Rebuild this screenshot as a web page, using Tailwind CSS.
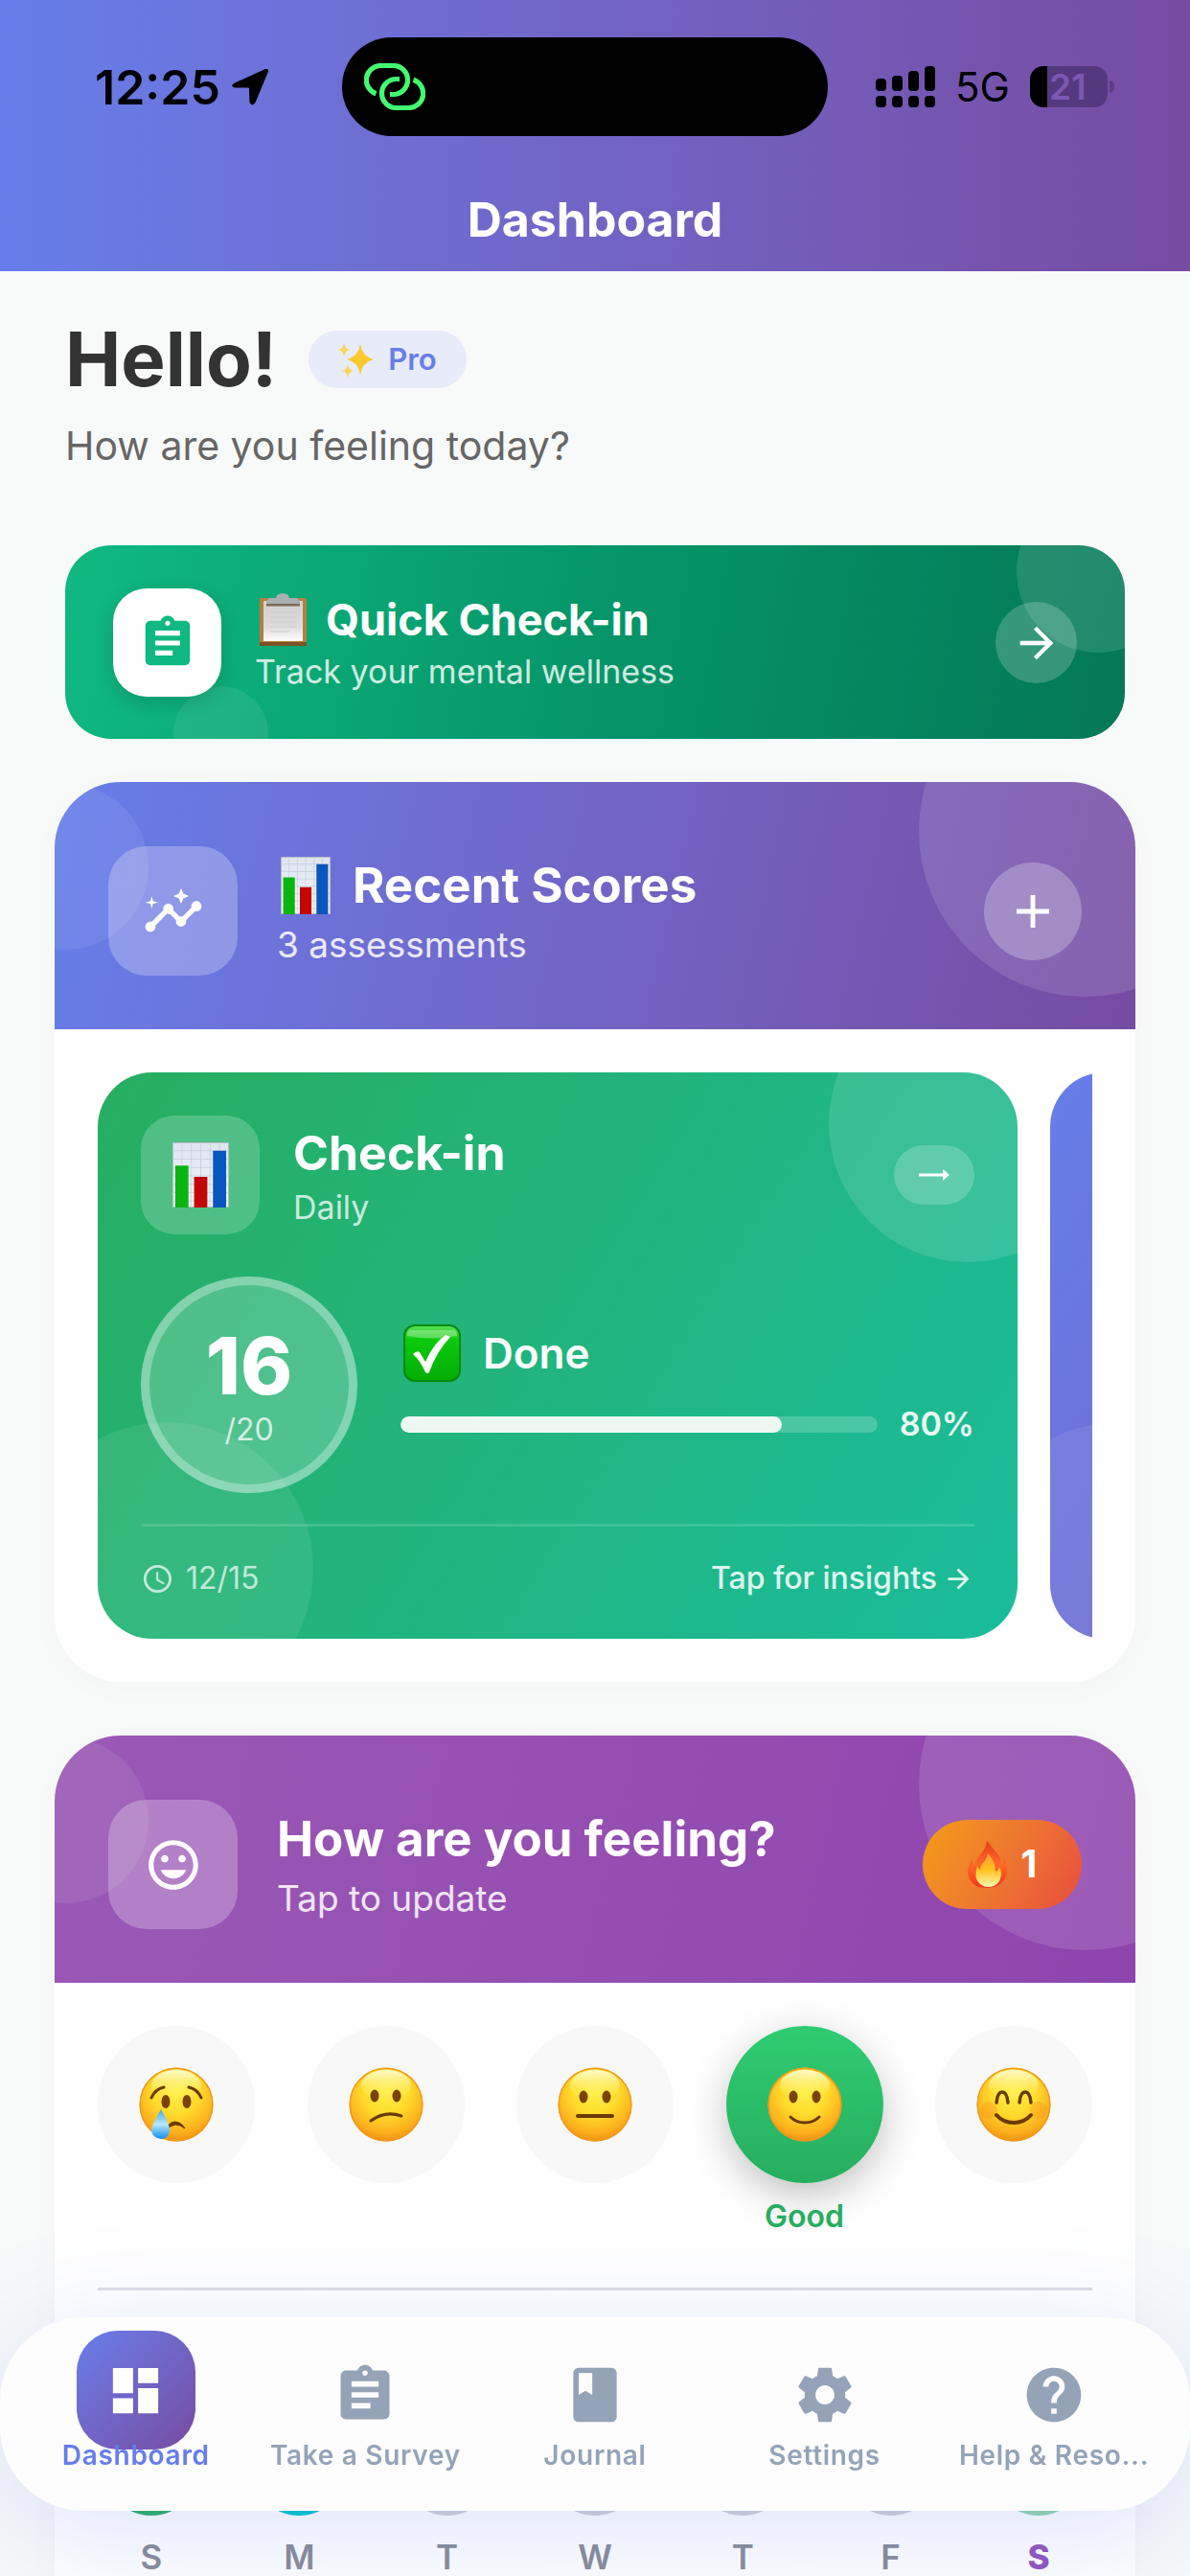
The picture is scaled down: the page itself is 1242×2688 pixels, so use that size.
<!DOCTYPE html>
<html lang="en">
<head>
  <meta charset="UTF-8">
  <title>Dashboard</title>
  <meta name="viewport" content="width=device-width, initial-scale=1.0">
  <script src="https://cdn.jsdelivr.net/npm/@tailwindcss/browser@4"></script>
  <style>
    body { font-family: 'Inter', 'Liberation Sans', sans-serif; }
  </style>
</head>
<body class="h-screen overflow-hidden bg-[#f8f9f9] flex flex-col">

  <!-- Shared shapes -->
  <svg class="absolute size-0" aria-hidden="true">
    <defs>
      <radialGradient id="face" cx="50%" cy="32%" r="70%">
        <stop offset="0" stop-color="#fff04a"/>
        <stop offset="0.45" stop-color="#ffdb2c"/>
        <stop offset="0.8" stop-color="#fcb01c"/>
        <stop offset="1" stop-color="#ee8b10"/>
      </radialGradient>
      <linearGradient id="shine" x1="0" y1="0" x2="0" y2="1">
        <stop offset="0" stop-color="#fffbd0"/>
        <stop offset="1" stop-color="#fff04a" stop-opacity="0"/>
      </linearGradient>
      <linearGradient id="tear" x1="0" y1="0" x2="0" y2="1">
        <stop offset="0" stop-color="#3aa5ea"/>
        <stop offset="0.5" stop-color="#b8e8fd"/>
        <stop offset="1" stop-color="#0a8fee"/>
      </linearGradient>
      <linearGradient id="chartPaper" x1="0" y1="0" x2="0" y2="1">
        <stop offset="0" stop-color="#dde5f0"/>
        <stop offset="1" stop-color="#f6f8fb"/>
      </linearGradient>
      <linearGradient id="checkBox" x1="0" y1="0" x2="0" y2="1">
        <stop offset="0" stop-color="#5fe05a"/>
        <stop offset="0.25" stop-color="#0ccb0c"/>
        <stop offset="1" stop-color="#02ad06"/>
      </linearGradient>
      <linearGradient id="boardPaper" x1="0" y1="0" x2="0" y2="1">
        <stop offset="0" stop-color="#d0d0d0"/>
        <stop offset="0.65" stop-color="#dcdcdc"/>
        <stop offset="1" stop-color="#ffffff"/>
      </linearGradient>
      <linearGradient id="flameOuter" x1="0" y1="0" x2="0" y2="1">
        <stop offset="0" stop-color="#e8391c"/>
        <stop offset="0.5" stop-color="#fb6a26"/>
        <stop offset="1" stop-color="#f4351b"/>
      </linearGradient>
      <linearGradient id="flameInner" x1="0" y1="0" x2="0" y2="1">
        <stop offset="0" stop-color="#ff9a3c"/>
        <stop offset="0.5" stop-color="#ffc21e"/>
        <stop offset="1" stop-color="#fff9b0"/>
      </linearGradient>
    </defs>
    <symbol id="head" viewBox="0 0 78 78">
      <circle cx="39" cy="39" r="38.5" fill="url(#face)"/>
      <circle cx="39" cy="39" r="37.8" fill="none" stroke="#f09a1e" stroke-width="1.5"/>
      <ellipse cx="39" cy="19" rx="26" ry="16" fill="url(#shine)"/>
    </symbol>
    <symbol id="chart" viewBox="0 0 60 70" preserveAspectRatio="none">
      <rect x="0.5" y="0.5" width="59" height="69" fill="url(#chartPaper)" stroke="#b4bcc6"/>
      <path d="M0 9h60M0 18h60M0 27h60M0 36h60M0 45h60M0 54h60M0 63h60M10 0v70M20 0v70M30 0v70M40 0v70M50 0v70" stroke="#c4cedb" stroke-width="0.8"/>
      <path d="M3 25h14v45H3z" fill="#0bb510"/>
      <path d="M23 37h14v33H23z" fill="#c40505"/>
      <path d="M43 9h14v61H43z" fill="#0a56bf"/>
    </symbol>
    <symbol id="clipboard" viewBox="0 0 24 24">
      <path d="M19 3h-4.18C14.4 1.84 13.3 1 12 1c-1.3 0-2.4.84-2.82 2H5c-1.1 0-2 .9-2 2v14c0 1.1.9 2 2 2h14c1.1 0 2-.9 2-2V5c0-1.1-.9-2-2-2zm-7 0c.55 0 1 .45 1 1s-.45 1-1 1-1-.45-1-1 .45-1 1-1zm2 14H7v-2h7v2zm3-4H7v-2h10v2zm0-4H7V7h10v2z"/>
    </symbol>
    <symbol id="arrow" viewBox="0 0 24 24">
      <path d="M12 4l-1.41 1.41L16.17 11H4v2h12.17l-5.58 5.59L12 20l8-8z"/>
    </symbol>
  </svg>

  <header class="shrink-0 bg-linear-to-r from-[#667eea] to-[#764ba2] pt-[39px] pb-[21px]">
    <!-- Status bar -->
    <div class="grid grid-cols-[357px_507px_1fr] items-center">
      <div class="flex items-center gap-[12px] pl-[99px]">
        <span class="text-[50px] leading-[60px] font-semibold text-black">12:25</span>
        <svg class="size-[39px]" viewBox="0 0 39 39"><path d="M2 16.5 35 1.5q3-1 2.500 2L24 36q-3 4-5 0l-.5-14.500q0-1.500-1.500-1.500L2 20q-3-1.500 0-3.500z" stroke="#000" stroke-width="1" stroke-linejoin="round"/></svg>
      </div>
      <div class="flex h-[103px] items-center rounded-full bg-black pl-[23px]">
        <svg class="h-[49px] w-[64px]" viewBox="0 0 64 49" fill="none" stroke="#43fb70" stroke-width="5.2">
          <path d="M27 32.5h3.500a15 15 0 0 0 0-30h-13a15 15 0 0 0-5 29.200"/>
          <path d="M37 16.5h-3.500a15 15 0 0 0 0 30h13a15 15 0 0 0 5-29.200"/>
        </svg>
      </div>
      <div class="flex items-center gap-[21px] pl-[50px]">
        <svg class="h-[43px] w-[62px]" viewBox="0 0 62 43">
          <rect x="0" y="13" width="11" height="13" rx="4"/><rect x="17" y="10" width="11" height="16" rx="4"/><rect x="34" y="5" width="11" height="21" rx="4"/><rect x="51" y="0" width="11" height="26" rx="4"/>
          <rect x="0" y="31" width="11" height="12" rx="4"/><rect x="17" y="31" width="11" height="12" rx="4"/><rect x="34" y="31" width="11" height="12" rx="4"/><rect x="51" y="31" width="11" height="12" rx="4"/>
        </svg>
        <span class="text-[42px] leading-[48px] text-black">5G</span>
        <div class="flex items-center gap-[2px]">
          <div class="flex h-[43px] w-[81px] items-center rounded-[14px] bg-linear-to-r from-black from-[22%] to-[#54397e] to-[22%] pl-[20px] text-[37px] leading-[43px] font-semibold text-[#7a58b2]">21</div>
          <div class="h-[13px] w-[5px] rounded-r-full bg-[#5c3d86]"></div>
        </div>
      </div>
    </div>
    <h1 class="mt-[54px] text-center text-[50px] leading-[66px] font-bold text-white">Dashboard</h1>
  </header>

  <main class="min-h-0 flex-1 px-[57px] pt-[50px]">
    <!-- Greeting -->
    <section class="px-[11px]">
      <div class="flex items-center gap-[33px]">
        <h2 class="text-[78px] leading-[84px] font-bold text-[#333333]">Hello!</h2>
        <span class="flex h-[60px] items-center gap-[14px] rounded-full bg-[#e8ebf9] px-[31px] text-[31px] font-semibold text-[#667eea]">
          <svg class="size-[38px]" viewBox="0 0 38 38" fill="#fdc92e">
            <path d="M23 3q2 13 14 16-12 3-14 16-2-13-14-16 12-3 14-16z"/>
            <path d="M6 2q1 6 6 7-5 1-6 7-1-6-6-7 5-1 6-7zM10 24q1 6 6 7-5 1-6 7-1-6-6-7 5-1 6-7z" fill="#fdd45a"/>
          </svg>
          Pro
        </span>
      </div>
      <p class="mt-[18px] text-[41px] leading-[60px] text-[#666666]">How are you feeling today?</p>
    </section>

    <!-- Quick check-in -->
    <a href="#" class="relative mx-[11px] mt-[74px] flex items-center overflow-hidden rounded-[48px] bg-linear-100 from-[#10b981] via-[#059669] to-[#047857] px-[50px] pt-[45px] pb-[44px]">
      <span class="absolute -top-[58px] -right-[57px] size-[170px] rounded-full bg-white/12"></span>
      <span class="absolute -bottom-[44px] left-[113px] size-[99px] rounded-full bg-white/8"></span>
      <span class="relative flex size-[113px] items-center justify-center rounded-[35px] bg-white shadow-[0_6px_20px_rgba(0,0,0,0.15)]">
        <svg class="size-[62px] fill-[#10b981]"><use href="#clipboard"/></svg>
      </span>
      <span class="relative ml-[35px] flex flex-1 flex-col gap-[4px]">
        <span class="flex items-center gap-[20px] text-[45px] leading-[56px] font-bold text-white">
          <svg class="h-[56px] w-[54px]" viewBox="0 0 54 56">
            <rect x="5" y="5" width="49" height="50" rx="2" fill="#b67f3c"/>
            <rect x="5" y="51" width="49" height="4" fill="#7b5226"/>
            <rect x="9" y="8" width="41" height="42" fill="url(#boardPaper)"/>
            <path d="M23 2q6-4 12 0l1 3h7q4 1 4 6H12q0-5 4-6h6z" fill="#aab0b2"/>
            <path d="M12 11h35v2.500H12z" fill="#7c6a56"/>
            <path d="M16 20h28M16 25h28M16 30h28M16 35h28M16 40h20" stroke="#cccccc"/>
          </svg>
          Quick Check-in
        </span>
        <span class="text-[34px] leading-[44px] text-white/80">Track your mental wellness</span>
      </span>
      <span class="relative flex size-[85px] items-center justify-center rounded-full bg-white/20">
        <svg class="size-[52px] fill-white"><use href="#arrow"/></svg>
      </span>
    </a>

    <!-- Recent scores -->
    <section class="mt-[45px] overflow-hidden rounded-[69px] bg-white shadow-[0_6px_40px_rgba(0,0,0,0.02)]">
      <div class="relative flex items-center overflow-hidden bg-linear-103 from-[#667eea] to-[#764ba2] px-[56px] pt-[67px] pb-[56px]">
        <span class="absolute -top-[122px] -right-[120px] size-[346px] rounded-full bg-white/12"></span>
        <span class="absolute top-[2px] -left-[75px] size-[173px] rounded-full bg-white/8"></span>
        <span class="relative flex size-[135px] items-center justify-center rounded-[40px] bg-white/25">
          <svg class="size-[64px] fill-white" viewBox="0 0 24 24"><path d="M21 8c-1.450 0-2.260 1.440-1.930 2.510l-3.550 3.560c-.3-.09-.74-.09-1.040 0l-2.550-2.550C12.270 10.450 11.460 9 10 9c-1.450 0-2.270 1.440-1.930 2.520l-4.560 4.550C2.440 15.740 1 16.550 1 18c0 1.100.9 2 2 2 1.450 0 2.260-1.440 1.930-2.510l4.550-4.560c.3.09.74.09 1.040 0l2.550 2.550C12.730 16.550 13.540 18 15 18c1.450 0 2.270-1.440 1.930-2.520l3.560-3.550C21.560 12.260 23 11.450 23 10c0-1.100-.9-2-2-2z"/><path d="M15 9l.94-2.070L18 6l-2.060-.93L15 3l-.92 2.070L12 6l2.080.93zM3.500 11L4 9l2-.5L4 8l-.5-2L3 8l-2 .5L3 9z"/></svg>
        </span>
        <div class="relative ml-[41px] flex flex-1 flex-col gap-[6px]">
          <h2 class="flex items-center gap-[23px] pl-[4px] text-[51px] leading-[64px] font-bold text-white">
            <svg class="h-[60px] w-[52px]"><use href="#chart"/></svg>
            Recent Scores
          </h2>
          <p class="text-[37px] leading-[48px] text-white/85">3 assessments</p>
        </div>
        <button type="button" aria-label="Add assessment" class="relative flex size-[102px] items-center justify-center rounded-full bg-white/25">
          <svg class="size-[58px] fill-white" viewBox="0 0 24 24"><path d="M19 13h-6v6h-2v-6H5v-2h6V5h2v6h6v2z"/></svg>
        </button>
      </div>

      <div class="p-[45px]">
        <div class="flex gap-[34px] overflow-hidden">
          <article class="relative w-[960px] shrink-0 overflow-hidden rounded-[57px] bg-linear-122 from-[#27ae60] to-[#1abc9c] px-[45px] pt-[45px] pb-[39px]">
            <span class="absolute -top-[91px] -right-[92px] size-[289px] rounded-full bg-white/12"></span>
            <span class="absolute -bottom-[80px] -left-[81px] size-[306px] rounded-full bg-white/8"></span>
            <div class="relative flex items-center">
              <span class="flex size-[124px] items-center justify-center rounded-[35px] bg-white/20">
                <svg class="h-[68px] w-[59px]"><use href="#chart"/></svg>
              </span>
              <div class="ml-[35px] flex flex-1 flex-col gap-[3px]">
                <h3 class="text-[50px] leading-[64px] font-bold text-white">Check-in</h3>
                <p class="text-[34px] leading-[44px] text-white/75">Daily</p>
              </div>
              <button type="button" aria-label="Open check-in" class="flex h-[62px] w-[84px] items-center justify-center rounded-full bg-white/20">
                <svg class="h-[14px] w-[32px] fill-white" viewBox="0 0 32 14"><path d="M0 5.500h25V1l7 6-7 6V8.500H0z"/></svg>
              </button>
            </div>

            <div class="relative mt-[44px] flex items-center gap-[45px]">
              <div class="flex size-[226px] flex-col items-center justify-center gap-[8px] rounded-full border-[9px] border-white/30 bg-white/20 pt-[10px]">
                <strong class="text-[82px] leading-[76px] font-extrabold text-white">16</strong>
                <span class="text-[32px] leading-[40px] text-white/75">/20</span>
              </div>
              <div class="flex flex-1 flex-col gap-[22px]">
                <div class="flex items-center gap-[23px] pl-[3px] text-[44px] leading-[60px] font-semibold text-white">
                  <svg class="size-[60px]" viewBox="0 0 60 60">
                    <rect x="1" y="1" width="58" height="58" rx="11" fill="url(#checkBox)" stroke="#078a10" stroke-width="2"/>
                    <path d="M7 6h46q3 1 3 6-26 5-52 0 0-5 3-6z" fill="#fff" opacity="0.3"/>
                    <path d="M10 31q4-4 7-2l6 10Q32 19 44 11l5 2Q34 29 27 50q-2 2-4 0Q18 38 10 31z" fill="#fff"/>
                  </svg>
                  Done
                </div>
                <div class="flex items-center gap-[23px]">
                  <div role="progressbar" aria-valuenow="80" aria-valuemin="0" aria-valuemax="100" class="h-[17px] flex-1 overflow-hidden rounded-full bg-white/20">
                    <div class="h-full rounded-full bg-[#edf8f3]" style="width: 80%"></div>
                  </div>
                  <span class="text-[34px] leading-[44px] font-semibold text-white/90">80%</span>
                </div>
              </div>
            </div>

            <div class="relative mt-[32px] flex items-center justify-between border-t-[3px] border-white/15 pt-[30px] leading-[48px]">
              <span class="flex items-center gap-[12px] text-[32px] text-white/70">
                <svg class="size-[35px] fill-white/70" viewBox="0 0 24 24"><path d="M11.990 2C6.470 2 2 6.480 2 12s4.470 10 9.990 10C17.520 22 22 17.520 22 12S17.520 2 11.990 2zM12 20c-4.420 0-8-3.580-8-8s3.580-8 8-8 8 3.580 8 8-3.580 8-8 8zm.5-13H11v6l5.250 3.150.75-1.230-4.500-2.670z"/></svg>
                12/15
              </span>
              <a href="#" class="flex items-center gap-[6px] text-[32px] font-medium text-white/85">
                Tap for insights
                <svg class="size-[33px] fill-white/85"><use href="#arrow"/></svg>
              </a>
            </div>
          </article>

          <article class="relative w-[960px] shrink-0 overflow-hidden rounded-[57px] bg-linear-122 from-[#667eea] to-[#764ba2]">
            <span class="absolute -bottom-[80px] -left-[81px] size-[306px] rounded-full bg-white/8"></span>
          </article>
        </div>
      </div>
    </section>

    <!-- Mood -->
    <section class="mt-[56px] overflow-hidden rounded-[69px] bg-white shadow-[0_6px_40px_rgba(0,0,0,0.02)]">
      <div class="relative flex items-center overflow-hidden bg-linear-103 from-[#9b59b6] to-[#8e44ad] px-[56px] pt-[67px] pb-[56px]">
        <span class="absolute -top-[122px] -right-[120px] size-[346px] rounded-full bg-white/12"></span>
        <span class="absolute top-[2px] -left-[75px] size-[173px] rounded-full bg-white/8"></span>
        <span class="relative flex size-[135px] items-center justify-center rounded-[40px] bg-white/25">
          <svg class="size-[62px] fill-white" viewBox="0 0 24 24"><path d="M11.990 2C6.470 2 2 6.480 2 12s4.470 10 9.990 10C17.520 22 22 17.520 22 12S17.520 2 11.990 2zM12 20c-4.420 0-8-3.580-8-8s3.580-8 8-8 8 3.580 8 8-3.580 8-8 8zm3.500-9c.83 0 1.500-.67 1.500-1.500S16.330 8 15.500 8 14 8.670 14 9.500s.67 1.500 1.500 1.500zm-7 0c.83 0 1.500-.67 1.500-1.500S9.330 8 8.500 8 7 8.670 7 9.500 7.670 11 8.500 11zm3.500 6.500c2.330 0 4.310-1.460 5.110-3.500H6.890c.8 2.040 2.780 3.500 5.110 3.500z"/></svg>
        </span>
        <div class="relative ml-[41px] flex flex-1 flex-col gap-[6px]">
          <h2 class="text-[51px] leading-[64px] font-bold text-white">How are you feeling?</h2>
          <p class="text-[37px] leading-[48px] text-white/85">Tap to update</p>
        </div>
        <span class="relative flex h-[93px] w-[166px] items-center justify-center gap-[14px] rounded-full bg-linear-120 from-[#f39c12] to-[#e74c3c] text-[39px] font-bold text-white">
          <svg class="h-[49px] w-[42px]" viewBox="0 0 42 49">
            <path d="M20 0q-1 7-5 12-7 8-8 13-2-2-2-6-5 7-5 14 2 16 20 16 18-1 21-16 1-8-3-15 0 4-3 7 0-8-5-13-5-6-10-12z" fill="url(#flameOuter)"/>
            <path d="M21 13q-1 6-6 11-2 3-2 6-2-1-3-4-4 12 2 18 4 4 9 4 8 0 12-6 4-8 0-15-1 4-4 5 0-11-8-19z" fill="url(#flameInner)"/>
          </svg>
          1
        </span>
      </div>

      <div class="px-[45px] pt-[45px] pb-[80px]">
        <div class="flex justify-between text-[32px] leading-[36px] font-semibold text-[#27ae60]">
          <button type="button" aria-label="Very sad" class="flex size-[164px] items-center justify-center rounded-full bg-[#f8f8f9]">
            <svg class="size-[78px]" viewBox="0 0 78 78">
              <use href="#head"/>
              <path d="M13 32q4-9 13-11M65 32q-4-9-13-11" fill="none" stroke="#6b3a05" stroke-width="3" stroke-linecap="round"/>
              <ellipse cx="28" cy="36" rx="4.500" ry="7" fill="#7a4308"/><ellipse cx="50" cy="36" rx="4.500" ry="7" fill="#7a4308"/>
              <path d="M29 65q2-8 9-8 7 1 10 7-5-4-10-4-5 1-9 5z" fill="#6b3a05" stroke="#6b3a05"/>
              <path d="M23 44q10 17 9 23-2 8-9 8-9-1-10-9 1-7 10-22z" fill="url(#tear)"/>
            </svg>
          </button>
          <button type="button" aria-label="Sad" class="flex size-[164px] items-center justify-center rounded-full bg-[#f8f8f9]">
            <svg class="size-[78px]" viewBox="0 0 78 78">
              <use href="#head"/>
              <ellipse cx="27" cy="30" rx="4.500" ry="6.500" fill="#7a4308"/><ellipse cx="50" cy="30" rx="4.500" ry="6.500" fill="#7a4308"/>
              <path d="M23 56q15-11 32-5" fill="none" stroke="#6b3a05" stroke-width="3" stroke-linecap="round"/>
            </svg>
          </button>
          <button type="button" aria-label="Neutral" class="flex size-[164px] items-center justify-center rounded-full bg-[#f8f8f9]">
            <svg class="size-[78px]" viewBox="0 0 78 78">
              <use href="#head"/>
              <ellipse cx="27" cy="31" rx="4.500" ry="6.500" fill="#7a4308"/><ellipse cx="51" cy="31" rx="4.500" ry="6.500" fill="#7a4308"/>
              <path d="M21 51h36" stroke="#6b3a05" stroke-width="4" stroke-linecap="round"/>
            </svg>
          </button>
          <button type="button" class="flex flex-col items-center gap-[17px]">
            <span class="flex size-[164px] items-center justify-center rounded-full bg-linear-to-b from-[#2ecc71] to-[#27ae60] shadow-[0_12px_42px_rgba(0,0,0,0.25)]">
              <svg class="size-[78px]" viewBox="0 0 78 78">
                <use href="#head"/>
                <ellipse cx="27" cy="31" rx="4.500" ry="6.500" fill="#7a4308"/><ellipse cx="51" cy="31" rx="4.500" ry="6.500" fill="#7a4308"/>
                <path d="M24 52q6 6 15 6t15-6" fill="none" stroke="#6b3a05" stroke-width="3" stroke-linecap="round"/>
              </svg>
            </span>
            Good
          </button>
          <button type="button" aria-label="Great" class="flex size-[164px] items-center justify-center rounded-full bg-[#f8f8f9]">
            <svg class="size-[78px]" viewBox="0 0 78 78">
              <use href="#head"/>
              <circle cx="13" cy="45" r="9" fill="#ff7a1c" opacity="0.25"/><circle cx="65" cy="45" r="9" fill="#ff7a1c" opacity="0.25"/>
              <path d="M21 37q1-11 6-11t6 11M45 37q1-11 6-11t6 11" fill="none" stroke="#6b3a05" stroke-width="3.500" stroke-linecap="round"/>
              <path d="M21 50q7 8 18 8t18-8" fill="none" stroke="#6b3a05" stroke-width="4" stroke-linecap="round"/>
            </svg>
          </button>
        </div>

        <!-- Week overview, one dot per day -->
        <ul class="mt-[56px] flex justify-between border-t-[3px] border-[#dddde2] pt-[133px] text-[35px] leading-[34px] font-semibold text-[#888c98]">
          <li class="flex w-[112px] flex-col items-center gap-[26px]"><span class="size-[102px] rounded-full bg-[#27ae60]"></span>S</li>
          <li class="flex w-[112px] flex-col items-center gap-[26px]"><span class="size-[102px] rounded-full bg-[#00c4cc]"></span>M</li>
          <li class="flex w-[112px] flex-col items-center gap-[26px]"><span class="size-[102px] rounded-full bg-[#d0d0d6]"></span>T</li>
          <li class="flex w-[112px] flex-col items-center gap-[26px]"><span class="size-[102px] rounded-full bg-[#d0d0d6]"></span>W</li>
          <li class="flex w-[112px] flex-col items-center gap-[26px]"><span class="size-[102px] rounded-full bg-[#d0d0d6]"></span>T</li>
          <li class="flex w-[112px] flex-col items-center gap-[26px]"><span class="size-[102px] rounded-full bg-[#d0d0d6]"></span>F</li>
          <li class="flex w-[112px] flex-col items-center gap-[26px] font-extrabold text-[#9355bb]"><span class="size-[102px] rounded-full bg-[#93d6b0]"></span>S</li>
        </ul>
      </div>
    </section>
  </main>

  <!-- Tab bar -->
  <nav class="fixed inset-x-0 bottom-[68px] grid grid-cols-5 rounded-[87px] bg-[#fdfdfe] px-[22px] pt-[47px] pb-[40px] text-[28px] leading-[36px] font-semibold text-[#94a3b8] shadow-[0_24px_120px_rgba(102,126,234,0.22)]">
    <a href="#" aria-current="page" class="flex flex-col items-center gap-[11px] text-[#667eea]">
      <span class="-mt-[33px] -mb-[23px] flex size-[124px] items-center justify-center rounded-[43px] bg-linear-135 from-[#667eea] to-[#764ba2]">
        <svg class="size-[63px] fill-white" viewBox="0 0 24 24"><path d="M3 13h8V3H3v10zm0 8h8v-6H3v6zm10 0h8V11h-8v10zm0-18v6h8V3h-8z"/></svg>
      </span>
      <span class="relative tracking-wide">Dashboard</span>
    </a>
    <a href="#" class="flex flex-col items-center gap-[11px]">
      <svg class="size-[68px] fill-current"><use href="#clipboard"/></svg>
      <span class="tracking-wide">Take a Survey</span>
    </a>
    <a href="#" class="flex flex-col items-center gap-[11px]">
      <svg class="size-[68px] fill-current" viewBox="0 0 24 24"><path d="M18 2H6c-1.100 0-2 .9-2 2v16c0 1.100.9 2 2 2h12c1.100 0 2-.9 2-2V4c0-1.100-.9-2-2-2zM6 4h5v8l-2.500-1.500L6 12V4z"/></svg>
      <span class="tracking-wide">Journal</span>
    </a>
    <a href="#" class="flex flex-col items-center gap-[11px]">
      <svg class="size-[68px] fill-current" viewBox="0 0 24 24"><path d="M19.430 12.980c.04-.32.07-.64.07-.98s-.03-.66-.07-.98l2.110-1.650c.19-.15.24-.42.12-.64l-2-3.460c-.12-.22-.39-.3-.61-.22l-2.490 1c-.52-.4-1.080-.73-1.690-.98l-.38-2.650C14.460 2.180 14.250 2 14 2h-4c-.25 0-.46.18-.49.42l-.38 2.650c-.61.25-1.170.59-1.690.98l-2.490-1c-.23-.09-.49 0-.61.22l-2 3.460c-.13.22-.07.49.12.64l2.110 1.650c-.04.32-.07.65-.07.98s.03.66.07.98l-2.110 1.650c-.19.15-.24.42-.12.64l2 3.460c.12.22.39.3.61.22l2.490-1c.52.4 1.080.73 1.690.98l.38 2.650c.03.24.24.42.49.42h4c.25 0 .46-.18.49-.42l.38-2.650c.61-.25 1.170-.59 1.690-.98l2.490 1c.23.09.49 0 .61-.22l2-3.460c.12-.22.07-.49-.12-.64l-2.110-1.650zM12 15.500c-1.930 0-3.500-1.570-3.500-3.500s1.570-3.500 3.500-3.500 3.500 1.570 3.500 3.500-1.570 3.500-3.500 3.500z"/></svg>
      <span class="tracking-wide">Settings</span>
    </a>
    <a href="#" class="flex flex-col items-center gap-[11px]">
      <svg class="size-[68px] fill-current" viewBox="0 0 24 24"><path d="M12 2C6.480 2 2 6.480 2 12s4.480 10 10 10 10-4.480 10-10S17.520 2 12 2zm1 17h-2v-2h2v2zm2.070-7.750l-.9.92C13.450 12.900 13 13.500 13 15h-2v-.5c0-1.100.45-2.100 1.170-2.830l1.240-1.260c.37-.36.59-.86.59-1.410 0-1.100-.9-2-2-2s-2 .9-2 2H8c0-2.210 1.790-4 4-4s4 1.790 4 4c0 .88-.36 1.680-.93 2.250z"/></svg>
      <span class="tracking-wide">Help &amp; Reso...</span>
    </a>
  </nav>
</body>
</html>
